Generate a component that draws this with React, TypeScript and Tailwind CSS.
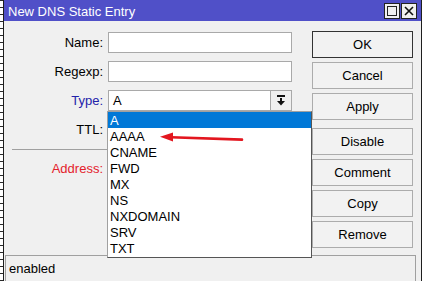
import React from 'react';

const FONT = { fontFamily: '"Liberation Sans", Arial, sans-serif' };

const dnsTypes = ['A', 'AAAA', 'CNAME', 'FWD', 'MX', 'NS', 'NXDOMAIN', 'SRV', 'TXT'];

function Field({ label, color = 'text-black', children }: { label: string; color?: string; children?: React.ReactNode }) {
  return (
    <div className="flex items-center h-[21px]">
      <div className={'w-[99px] text-right text-[13px] leading-none ' + color}>{label}</div>
      <div className="ml-[5px] w-[184px] h-[21px] flex">
        {children ?? <div className="flex-1 bg-white border border-[#a9a9a9]" />}
      </div>
    </div>
  );
}

function Btn({ label, primary = false, className = '' }: { label: string; primary?: boolean; className?: string }) {
  return (
    <div
      className={
        'h-[27px] w-[101px] flex items-center justify-center text-[13px] text-black bg-[#f2f2f2] border ' +
        (primary ? 'border-[#333333]' : 'border-[#acacac]') +
        ' ' +
        className
      }
    >
      {label}
    </div>
  );
}

export default function App() {
  return (
    <div className="relative w-[424px] h-[281px] overflow-hidden bg-white flex" style={FONT}>
      {/* edge of the window behind */}
      <div className="w-[3px] h-full bg-[repeating-linear-gradient(180deg,#2a2a2a_0px,#2a2a2a_1px,#ffffff_1px,#ffffff_7px)]" />

      <div className="w-[419px] h-full border-x border-[#1e1e1e] flex flex-col">
        {/* title bar */}
        <div className="h-[21px] bg-[#5050c8] flex items-center pl-[4px] pr-[4px]">
          <span className="text-white text-[13px] leading-none pt-[2px]">New DNS Static Entry</span>
          <div className="ml-auto flex gap-[1px]">
            <div className="w-[16px] h-[16px] bg-[#f0f0f0] border border-[#222] flex items-center justify-center">
              <div className="w-[10px] h-[10px] border border-[#222]" />
            </div>
            <div className="w-[16px] h-[16px] bg-[#f0f0f0] border border-[#222] flex items-center justify-center">
              <svg width="10" height="10" viewBox="0 0 10 10">
                <path d="M1 1 L9 9 M9 1 L1 9" stroke="#111" strokeWidth="1.6" />
              </svg>
            </div>
          </div>
        </div>

        {/* main */}
        <div className="relative h-[234px] bg-[#f0f0f0] flex">
          <div className="w-[288px] flex flex-col pt-[11px] gap-[8px]">
            <Field label="Name:" />
            <Field label="Regexp:" />
            <Field label="Type:" color="text-[#2323aa]">
              <div className="flex-1 bg-white border border-[#a9a9a9] flex items-center pl-[4px] text-[13px] leading-none">
                A
              </div>
              <div className="w-[21px] bg-[#f0f0f0] border border-[#a9a9a9] border-l-0 flex items-center justify-center">
                <svg width="10" height="11" viewBox="0 0 10 11">
                  <rect x="1" y="0" width="8" height="2" fill="#111" />
                  <rect x="4" y="3" width="2" height="4" fill="#111" />
                  <path d="M1 6 L9 6 L5 10.5 Z" fill="#111" />
                </svg>
              </div>
            </Field>
            <Field label="TTL:" />
            <div className="ml-[8px] w-[280px] h-px bg-[#a0a0a0] mt-[1px]" />
            <Field label="Address:" color="text-[#e4212b]" />
          </div>

          <div className="ml-[20px] pt-[10px] flex flex-col gap-[4px]">
            <Btn label="OK" primary />
            <Btn label="Cancel" />
            <Btn label="Apply" />
            <Btn label="Disable" className="mt-[4px]" />
            <Btn label="Comment" />
            <Btn label="Copy" />
            <Btn label="Remove" />
          </div>

          {/* open type list */}
          <div className="absolute z-10 left-[103px] top-[90px] w-[205px] h-[147px] bg-white border border-[#a0a0a0] border-r-[#555555] border-b-[#555555]">
            {dnsTypes.map((t, i) => (
              <div
                key={t}
                className={
                  'h-[16px] flex items-center pl-[2px] text-[13px] leading-none ' +
                  (i === 0 ? 'bg-[#0078d7] text-white' : 'text-black')
                }
              >
                {t}
              </div>
            ))}
          </div>
        </div>

        {/* status bar */}
        <div className="flex-1 bg-[#f0f0f0]">
          <div className="ml-[1px] w-[411px] h-full border-t border-l border-r border-[#a0a0a0] flex items-center pl-[3px] text-[13px] text-black">
            enabled
          </div>
        </div>
      </div>

      <div className="flex-1 h-full bg-white" />

      {/* red pointer arrow */}
      <svg className="absolute z-20 left-[158px] top-[131px]" width="88" height="14" viewBox="0 0 88 14">
        <path d="M2 5.8 L15 1.5 L15 10.5 Z" fill="#e3161f" />
        <path d="M13 6.2 L84 8.6" stroke="#e3161f" strokeWidth="2.6" strokeLinecap="round" />
      </svg>
    </div>
  );
}
